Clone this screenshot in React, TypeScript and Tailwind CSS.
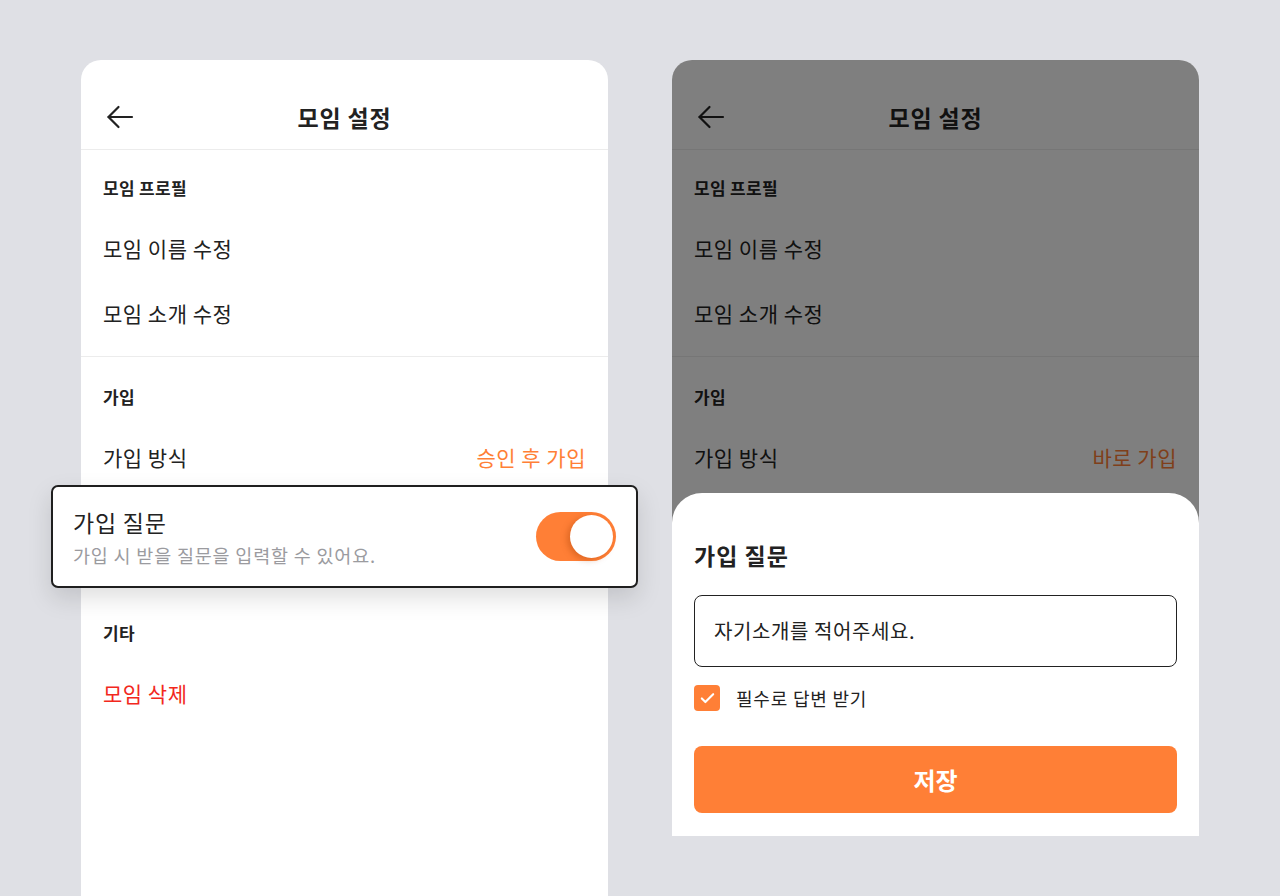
import { Check } from 'lucide-react'

const font = { fontFamily: '"Noto Sans CJK KR", "Noto Sans", sans-serif' }

function BackArrow() {
  return (
    <svg width="28" height="28" viewBox="0 0 28 28" fill="none" stroke="#222222" strokeWidth="2.2" strokeLinecap="round" strokeLinejoin="round">
      <path d="M2.5 14H26" />
      <path d="M12.5 4L2.5 14L12.5 24" />
    </svg>
  )
}

function SectionTitle({ children }: { children: string }) {
  return <div className="h-[32px] flex items-center text-[17px] tracking-[0.3px] font-bold text-[#222222]">{children}</div>
}

function Row({ label, value, danger }: { label: string; value?: string; danger?: boolean }) {
  return (
    <div className="h-[65px] flex items-center justify-between">
      <span className={danger ? 'text-[21px] tracking-[0.5px] text-[#f2281d]' : 'text-[21px] tracking-[0.5px] text-[#222222]'}>{label}</span>
      {value && <span className="text-[21px] tracking-[0.5px] text-[#ff7f36]">{value}</span>}
    </div>
  )
}

function Toggle() {
  return (
    <div className="w-[80px] h-[49px] rounded-full bg-[#ff7f36] flex items-center justify-end pr-[3px]">
      <div className="w-[43px] h-[43px] rounded-full bg-white shadow-[-3px_2px_6px_rgba(160,60,0,0.35)]" />
    </div>
  )
}

function Settings({ joinValue, highlight, covered }: { joinValue: string; highlight?: boolean; covered?: boolean }) {
  return (
    <div className="flex flex-col">
      {/* 헤더 */}
      <div className="pt-[42px] pb-[17px] border-b border-[#ececec] grid grid-cols-[1fr_auto_1fr] items-center px-[25px]">
        <div className="h-[30px] flex items-center">
          <BackArrow />
        </div>
        <h1 className="text-[23px] tracking-[0.8px] font-bold text-[#222222] leading-[30px]">모임 설정</h1>
        <div />
      </div>

      {/* 모임 프로필 */}
      <div className="px-[22px] pt-[22px] pb-[10px] border-b border-[#ececec]">
        <SectionTitle>모임 프로필</SectionTitle>
        <div className="mt-[12px]">
          <Row label="모임 이름 수정" />
          <Row label="모임 소개 수정" />
        </div>
      </div>

      {/* 가입 */}
      <div className="px-[22px] pt-[24px]">
        <SectionTitle>가입</SectionTitle>
        <div className="mt-[12px]">
          <Row label="가입 방식" value={joinValue} />
          {highlight && (
            <div className="-mx-[52px] -mt-[5px] h-[103px] bg-white border-2 border-[#1f1f1f] rounded-[7px] shadow-[0_10px_24px_rgba(0,0,0,0.13)] pl-[20px] pr-[20px] flex items-center justify-between">
              <div className="flex flex-col">
                <span className="text-[23px] tracking-[0.8px] text-[#222222] leading-[32px]">가입 질문</span>
                <span className="text-[18.5px] tracking-[0.8px] text-[#9b9b9f] leading-[26px] mt-[4px]">가입 시 받을 질문을 입력할 수 있어요.</span>
              </div>
              <Toggle />
            </div>
          )}
        </div>
      </div>

      {/* 기타 */}
      {!covered && (
        <div className="px-[22px] pt-[29px]">
          <SectionTitle>기타</SectionTitle>
          <div className="mt-[12px]">
            <Row label="모임 삭제" danger />
          </div>
        </div>
      )}
    </div>
  )
}

export default function App() {
  return (
    <div className="w-[1280px] h-[896px] overflow-hidden bg-[#dfe0e5] flex items-start gap-[64px] pl-[81px] pt-[60px]" style={font}>
      {/* 왼쪽: 설정 화면 */}
      <div className="w-[527px] h-[860px] bg-white rounded-t-[20px] shrink-0">
        <Settings joinValue="승인 후 가입" highlight />
      </div>

      {/* 오른쪽: 바텀시트 */}
      <div className="relative w-[527px] h-[776px] bg-white rounded-t-[20px] overflow-hidden shrink-0">
        <Settings joinValue="바로 가입" covered />
        <div className="absolute inset-0 bg-black/50" />
        <div className="absolute left-0 right-0 bottom-0 h-[343px] bg-white rounded-t-[30px] px-[22px] pt-[46px]">
          <h2 className="h-[32px] flex items-center text-[23px] tracking-[1px] font-bold text-[#222222]">가입 질문</h2>
          <div className="mt-[24px] h-[72px] border-[1.5px] border-[#222222] rounded-[8px] px-[19px] flex items-center text-[20px] tracking-[0.6px] text-[#222222]">
            자기소개를 적어주세요.
          </div>
          <label className="mt-[18px] flex items-center gap-[16px] h-[26px]">
            <span className="w-[26px] h-[26px] rounded-[4px] bg-[#ff7f36] flex items-center justify-center">
              <Check className="w-[17px] h-[17px] text-white" strokeWidth={3} />
            </span>
            <span className="text-[18px] tracking-[0.8px] text-[#222222]">필수로 답변 받기</span>
          </label>
          <button className="mt-[35px] w-full h-[67px] rounded-[8px] bg-[#ff7f36] text-white text-[24px] font-bold">
            저장
          </button>
        </div>
      </div>
    </div>
  )
}
